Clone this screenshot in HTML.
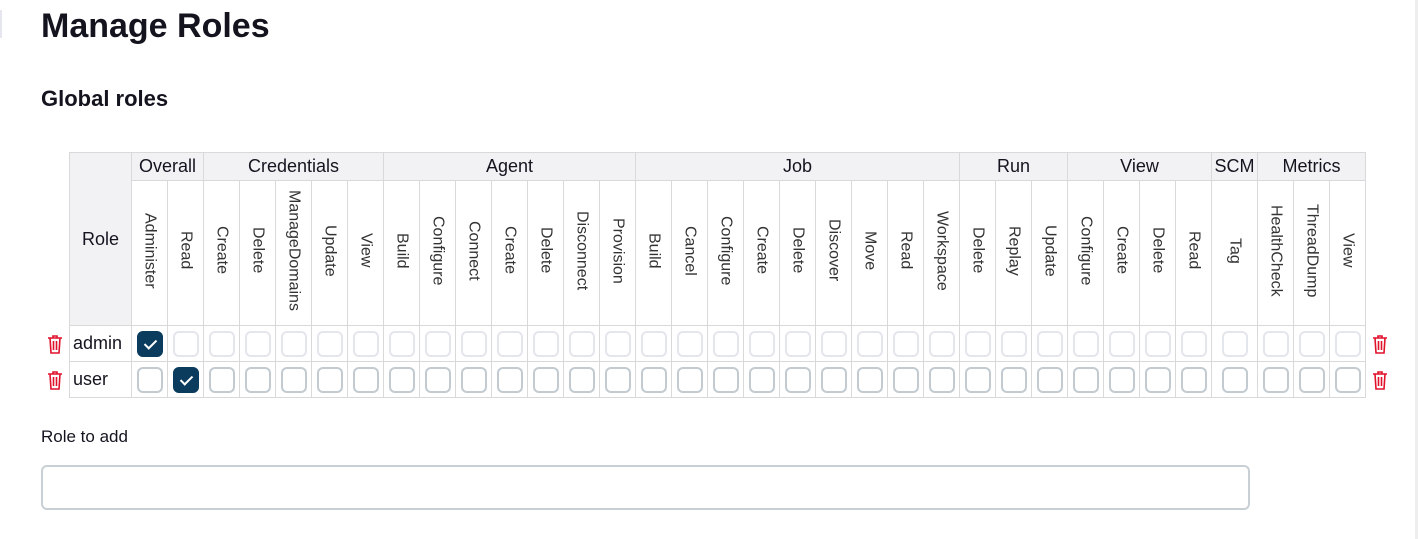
<!DOCTYPE html>
<html><head><meta charset="utf-8"><style>
body{margin:0;width:1418px;height:539px;background:#fff;font-family:"Liberation Sans",sans-serif;color:#14141f;position:relative;overflow:hidden}
h1{position:absolute;left:41px;top:7px;margin:0;font-size:34px;font-weight:bold}
h2{position:absolute;left:41px;top:86px;margin:0;font-size:22px;font-weight:bold}
table{position:absolute;left:69px;top:152px;border-collapse:collapse;table-layout:fixed;font-size:18px}
td,th{border:1px solid #d9d9d9;padding:0;font-weight:normal;text-align:center}
.h1 th{background:#f2f2f5;height:27px}
.h2 th{height:144px}
.h2 th.v span{writing-mode:vertical-rl;display:inline-block;font-size:16px;color:#333}
th.role{background:#f2f2f5}
tr.r td{height:35px}
td.n{text-align:left;padding-left:3px}
.cb{display:block;margin:0 auto;width:22px;height:22px;border:2px solid #e3e7eb;border-radius:6px;box-sizing:content-box}
.u .cb{border-color:#c3cbd1}
.cb.on{background:#0b3c5d;border-color:#0b3c5d;position:relative}
.cb.on::after{content:"";position:absolute;left:8px;top:4px;width:5px;height:10px;border:solid #fff;border-width:0 2px 2px 0;transform:rotate(45deg)}
.tr{position:absolute;width:16px;height:20px}
.lbl{position:absolute;left:41px;top:427px;font-size:17px}
.inp{position:absolute;left:41px;top:465px;width:1209px;height:45px;border:2px solid #c8d0d6;border-radius:6px;box-sizing:border-box}
.edge{position:absolute;left:1415px;top:0;width:3px;height:539px;background:#eee}
</style></head><body>
<div style="position:absolute;left:0;top:10px;width:2px;height:28px;background:#e6e6ee"></div>
<h1>Manage Roles</h1>
<h2>Global roles</h2>
<table id="t"></table>
<div class="lbl">Role to add</div>
<div class="inp"></div>
<div class="edge"></div>
<script>
var groups=[["Overall",["Administer","Read"]],["Credentials",["Create","Delete","ManageDomains","Update","View"]],["Agent",["Build","Configure","Connect","Create","Delete","Disconnect","Provision"]],["Job",["Build","Cancel","Configure","Create","Delete","Discover","Move","Read","Workspace"]],["Run",["Delete","Replay","Update"]],["View",["Configure","Create","Delete","Read"]],["SCM",["Tag"]],["Metrics",["HealthCheck","ThreadDump","View"]]];
var cg='<colgroup><col style="width:62px">',h1='<tr class="h1"><th class="role" rowspan="2">Role</th>',h2='<tr class="h2">',n=0;
groups.forEach(function(g){h1+='<th colspan="'+g[1].length+'">'+g[0]+'</th>';g[1].forEach(function(p){cg+='<col style="width:'+(g[0]=="SCM"?46:36)+'px">';h2+='<th class="v"><span>'+p+'</span></th>';n++;});});
function row(name,cls,on){var s='<tr class="r '+cls+'"><td class="n">'+name+'</td>';for(var i=0;i<n;i++)s+='<td><span class="cb'+(i==on?' on':'')+'"></span></td>';return s+'</tr>';}
document.getElementById('t').innerHTML=cg+'</colgroup>'+h1+'</tr>'+h2+'</tr>'+row('admin','a',0)+row('user','u',1);
var trash='<svg viewBox="0 0 16 20" width="16" height="20" fill="none" stroke="#e0112b" stroke-width="1.6"><path d="M1 4h14M6 4V2h4v2M3 4l1 15h8l1-15M6.5 7v9M9.5 7v9"/></svg>';
[[47,334],[47,370],[1372,334],[1372,370]].forEach(function(p){var d=document.createElement('div');d.className='tr';d.style.left=p[0]+'px';d.style.top=p[1]+'px';d.innerHTML=trash;document.body.appendChild(d);});
</script>
</body></html>
